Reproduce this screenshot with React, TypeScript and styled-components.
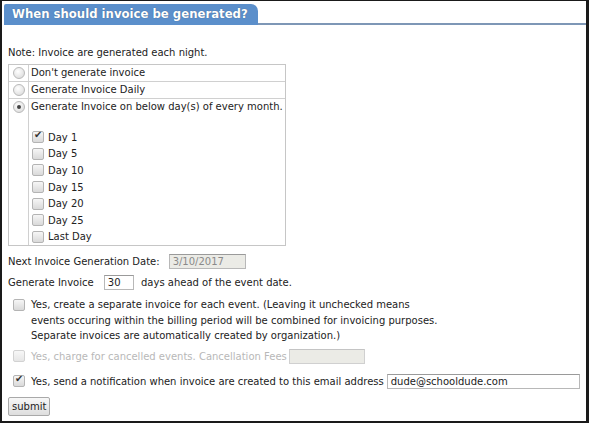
import React from "react";
import styled, { createGlobalStyle } from "styled-components";

const GlobalStyle = createGlobalStyle`
  html, body {
    margin: 0;
    padding: 0;
    background: #ffffff;
  }
  body {
    font-family: "DejaVu Sans", Verdana, sans-serif;
    font-size: 10px;
    color: #222;
  }
`;

const Frame = styled.div`
  width: 589px;
  height: 423px;
  box-sizing: border-box;
  border-top: 1px solid #1a1a1a;
  border-left: 2px solid #1a1a1a;
  border-right: 3px solid #1a1a1a;
  border-bottom: 2px solid #1a1a1a;
  background: #fff;
  display: flex;
  flex-direction: column;
  overflow: hidden;
`;

const TabBar = styled.div`
  display: flex;
  align-items: flex-end;
  padding: 3px 0 0 2px;
`;

const Tab = styled.div`
  background: #5b8fcb;
  color: #fff;
  font-weight: bold;
  font-size: 11.7px;
  height: 21px;
  line-height: 20px;
  padding: 0 10px 0 8px;
  border-top-right-radius: 7px;
  border-top-left-radius: 2px;
  text-shadow: 0 0 1px rgba(0, 0, 0, 0.4);
  white-space: nowrap;
`;

const TabRule = styled.div`
  flex: 1;
  border-bottom: 2px solid #7e97b6;
`;

const Body = styled.div`
  padding: 21px 6px 0 6px;
  display: flex;
  flex-direction: column;
`;

const Note = styled.div`
  height: 14px;
  line-height: 14px;
  margin-bottom: 4px;
`;

const OptionTable = styled.div`
  width: 276px;
  border: 1px solid #c6c6c6;
  display: grid;
  grid-template-columns: 20px 1fr;
`;

const Cell = styled.div<{ $last?: boolean }>`
  border-bottom: ${(p) => (p.$last ? "none" : "1px solid #d0d0d0")};
  display: flex;
  flex-direction: column;
`;

const RadioCell = styled(Cell)`
  align-items: center;
  justify-content: flex-start;
  padding-top: 2px;
  border-right: 1px solid #d0d0d0;
`;

const OptionText = styled.div`
  height: 16px;
  line-height: 16px;
  padding-left: 2px;
  white-space: nowrap;
`;

const Radio = styled.span<{ $on?: boolean }>`
  display: inline-block;
  width: 10px;
  height: 10px;
  border-radius: 50%;
  border: 1px solid #b9b9b9;
  background: radial-gradient(circle at 40% 35%, #ffffff 0%, #e2e2e2 70%, #cfcfcf 100%);
  position: relative;
  &::after {
    content: "";
    display: ${(p) => (p.$on ? "block" : "none")};
    position: absolute;
    left: 3px;
    top: 3px;
    width: 4px;
    height: 4px;
    border-radius: 50%;
    background: #444;
  }
`;

const DayList = styled.div`
  display: flex;
  flex-direction: column;
  padding: 14px 0 0 3px;
`;

const CheckRow = styled.label`
  display: flex;
  align-items: center;
  gap: 4px;
  height: 16.6px;
`;

const Box = styled.span<{ $on?: boolean; $dim?: boolean }>`
  display: inline-block;
  flex: none;
  width: 10px;
  height: 10px;
  border: 1px solid ${(p) => (p.$dim ? "#d2d2d2" : "#b4b4b4")};
  border-radius: 2px;
  background: ${(p) => (p.$dim ? "linear-gradient(#f7f7f7, #e6e6e6)" : "linear-gradient(#f6f6f6, #d9d9d9)")};
  position: relative;
  &::after {
    content: "✔";
    display: ${(p) => (p.$on ? "block" : "none")};
    position: absolute;
    left: 1px;
    top: -3px;
    font-size: 10px;
    color: #333;
  }
`;

const Line = styled.div<{ $dim?: boolean; $top: number; $indent?: boolean }>`
  display: flex;
  align-items: center;
  gap: ${(p) => (p.$indent ? 6 : 4)}px;
  height: 15px;
  margin-top: ${(p) => p.$top}px;
  padding-left: ${(p) => (p.$indent ? 5 : 0)}px;
  color: ${(p) => (p.$dim ? "#b8b8b8" : "#222")};
  white-space: nowrap;
`;

const Field = styled.span<{ $w: number; $gray?: boolean; $dim?: boolean; $shift?: number }>`
  display: inline-block;
  flex: none;
  box-sizing: border-box;
  width: ${(p) => p.$w}px;
  height: 15px;
  line-height: 13px;
  padding: 0 3px;
  margin-left: ${(p) => p.$shift ?? 0}px;
  border: 1px solid ${(p) => (p.$dim ? "#d0d0d0" : "#b8b8b8")};
  border-top-color: ${(p) => (p.$dim ? "#c4c4c4" : "#9a9a9a")};
  background: ${(p) => (p.$gray ? "#ebebe6" : "#fff")};
  color: ${(p) => (p.$gray ? "#8a8a8a" : "#222")};
`;

const Para = styled.div`
  display: flex;
  gap: 6px;
  padding-left: 5px;
  line-height: 15.5px;
  margin-top: 7px;
`;

const ParaBox = styled.div`
  padding-top: 2px;
`;

const SubmitButton = styled.button`
  align-self: flex-start;
  margin-top: 8px;
  height: 19px;
  padding: 0 3px;
  font-family: "DejaVu Sans", Verdana, sans-serif;
  font-size: 10px;
  color: #222;
  border: 1px solid #a9a9a9;
  border-radius: 2px;
  background: linear-gradient(#f7f7f7, #dedede);
`;

const days = ["Day 1", "Day 5", "Day 10", "Day 15", "Day 20", "Day 25", "Last Day"];

export default function App() {
  return (
    <>
      <GlobalStyle />
      <Frame>
        <TabBar>
          <Tab>When should invoice be generated?</Tab>
          <TabRule />
        </TabBar>
        <Body>
          <Note>Note: Invoice are generated each night.</Note>
          <OptionTable>
            <RadioCell>
              <Radio />
            </RadioCell>
            <Cell>
              <OptionText>Don't generate invoice</OptionText>
            </Cell>
            <RadioCell>
              <Radio />
            </RadioCell>
            <Cell>
              <OptionText>Generate Invoice Daily</OptionText>
            </Cell>
            <RadioCell $last>
              <Radio $on />
            </RadioCell>
            <Cell $last>
              <OptionText>Generate Invoice on below day(s) of every month.</OptionText>
              <DayList>
                {days.map((d, i) => (
                  <CheckRow key={d}>
                    <Box $on={i === 0} />
                    {d}
                  </CheckRow>
                ))}
              </DayList>
            </Cell>
          </OptionTable>

          <Line $top={8}>
            Next Invoice Generation Date:
            <Field $w={77} $gray $shift={5}>3/10/2017</Field>
          </Line>
          <Line $top={6}>
            Generate Invoice&nbsp;
            <Field $w={30} $shift={3}>30</Field>&nbsp;days ahead of the event date.
          </Line>

          <Para>
            <ParaBox>
              <Box />
            </ParaBox>
            <div>
              Yes, create a separate invoice for each event. (Leaving it unchecked means
              <br />
              events occuring within the billing period will be combined for invoicing purposes.
              <br />
              Separate invoices are automatically created by organization.)
            </div>
          </Para>

          <Line $dim $indent $top={5}>
            <Box $dim />
            <span>Yes, charge for cancelled events. Cancellation Fees</span>
            <Field $w={76} $gray $dim $shift={-4} />
          </Line>

          <Line $indent $top={10}>
            <Box $on />
            <span>Yes, send a notification when invoice are created to this email address</span>
            <Field $w={193} $shift={-3}>dude@schooldude.com</Field>
          </Line>

          <SubmitButton>submit</SubmitButton>
        </Body>
      </Frame>
    </>
  );
}
